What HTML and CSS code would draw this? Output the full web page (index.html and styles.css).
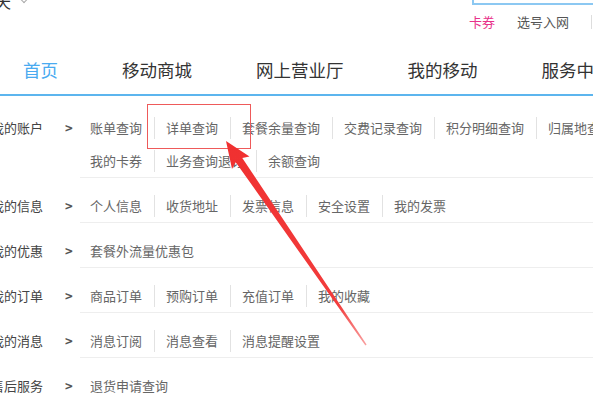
FILE: index.html
```html
<!DOCTYPE html>
<html lang="zh-CN">
<head>
    <meta charset="UTF-8">
    <meta name="viewport" content="width=device-width, initial-scale=1.0">
    <title>我的移动</title>
    <link rel="stylesheet" href="styles.css">
</head>
<body>
    <div class="page">
        <div class="top">
            <div class="city">天<span class="caret"></span></div>
            <div class="tools">
                <svg class="search" width="130" height="5" viewBox="0 0 130 5">
                    <path d="M1 0 V4 H130" fill="none" stroke="#8cc8f2" stroke-width="2"/>
                </svg>
                <div class="quick">
                    <a class="quick-link hot" href="#">卡券</a>
                    <a class="quick-link" href="#">选号入网</a>
                    <span class="bar"></span>
                </div>
            </div>
        </div>

        <div class="nav">
            <a class="nav-item active" href="#">首页</a>
            <a class="nav-item" href="#">移动商城</a>
            <a class="nav-item" href="#">网上营业厅</a>
            <a class="nav-item" href="#">我的移动</a>
            <a class="nav-item" href="#">服务中心</a>
        </div>

        <div class="menu">
            <div class="row">
                <div class="label"><span class="name">我的账户</span><span class="arrow">&gt;</span></div>
                <div class="links">
                    <div class="line">
                        <a href="#">账单查询</a>
                        <a href="#">详单查询</a>
                        <a href="#">套餐余量查询</a>
                        <a href="#">交费记录查询</a>
                        <a href="#">积分明细查询</a>
                        <a href="#">归属地查询</a>
                    </div>
                    <div class="line">
                        <a href="#">我的卡券</a>
                        <a href="#">业务查询退订</a>
                        <a href="#">余额查询</a>
                    </div>
                </div>
            </div>
            <div class="row">
                <div class="label"><span class="name">我的信息</span><span class="arrow">&gt;</span></div>
                <div class="links">
                    <div class="line">
                        <a href="#">个人信息</a>
                        <a href="#">收货地址</a>
                        <a href="#">发票信息</a>
                        <a href="#">安全设置</a>
                        <a href="#">我的发票</a>
                    </div>
                </div>
            </div>
            <div class="row">
                <div class="label"><span class="name">我的优惠</span><span class="arrow">&gt;</span></div>
                <div class="links">
                    <div class="line">
                        <a href="#">套餐外流量优惠包</a>
                    </div>
                </div>
            </div>
            <div class="row">
                <div class="label"><span class="name">我的订单</span><span class="arrow">&gt;</span></div>
                <div class="links">
                    <div class="line">
                        <a href="#">商品订单</a>
                        <a href="#">预购订单</a>
                        <a href="#">充值订单</a>
                        <a href="#">我的收藏</a>
                    </div>
                </div>
            </div>
            <div class="row">
                <div class="label"><span class="name">我的消息</span><span class="arrow">&gt;</span></div>
                <div class="links">
                    <div class="line">
                        <a href="#">消息订阅</a>
                        <a href="#">消息查看</a>
                        <a href="#">消息提醒设置</a>
                    </div>
                </div>
            </div>
            <div class="row">
                <div class="label"><span class="name">售后服务</span><span class="arrow">&gt;</span></div>
                <div class="links">
                    <div class="line">
                        <a href="#">退货申请查询</a>
                    </div>
                </div>
            </div>
        </div>

        <svg class="marks" width="593" height="400" viewBox="0 0 593 400">
            <defs>
                <linearGradient id="fade" x1="226" y1="141" x2="366" y2="345" gradientUnits="userSpaceOnUse">
                    <stop offset="0" stop-color="#f03030"/>
                    <stop offset="0.8" stop-color="#f23c3c"/>
                    <stop offset="1" stop-color="#f9a0a0"/>
                </linearGradient>
            </defs>
            <rect x="147.5" y="104.5" width="103" height="44" fill="none" stroke="#ee5a5a" stroke-width="1"/>
            <polygon fill="url(#fade)" points="226,141 249.5,156.5 242.3,158 366.6,344.6 365.4,345.4 235.7,162.2 232,169"/>
        </svg>
    </div>
</body>
</html>
```

FILE: styles.css
```css
body {
    margin: 0;
    padding: 0;
    background-color: #fff;
    font-family: "Microsoft YaHei", "Noto Sans CJK SC", sans-serif;
    overflow: hidden;
}

a {
    text-decoration: none;
}

.page {
    position: relative;
    width: 593px;
    height: 400px;
    overflow: hidden;
}

.top {
    display: flex;
    align-items: flex-start;
    height: 44px;
}

    .top .city {
        flex-shrink: 0;
        margin: -9px 0 0 -5px;
        font-size: 16px;
        line-height: 20px;
        height: 20px;
        color: #333;
        white-space: nowrap;
    }

    .top .caret {
        display: inline-block;
        width: 5px;
        height: 5px;
        margin-left: 10px;
        border-right: 1px solid #aaa;
        border-bottom: 1px solid #aaa;
        transform: translateY(-6px) rotate(45deg);
    }

.tools {
    margin-left: 442px;
    flex-shrink: 0;
}

    .tools .search {
        display: block;
        margin-left: 3px;
    }

.quick {
    display: flex;
    align-items: center;
    margin-top: 9px;
    font-size: 13px;
    line-height: 16px;
    white-space: nowrap;
}

    .quick .quick-link {
        margin-right: 22px;
        color: #555;
    }

        .quick .quick-link.hot {
            color: #e8318a;
        }

    .quick .bar {
        width: 1px;
        height: 14px;
        background-color: #ddd;
    }

.nav {
    display: flex;
    height: 50px;
    align-items: center;
    padding-left: 23px;
    border-bottom: 2px solid #5cb5ee;
    white-space: nowrap;
}

    .nav .nav-item {
        margin-right: 64px;
        font-size: 17.5px;
        color: #333;
        flex-shrink: 0;
    }

        .nav .nav-item.active {
            color: #4aaaf0;
        }

.menu {
    margin: 4px 0 0 -9px;
}

.row {
    display: flex;
}

    .row .label {
        display: flex;
        width: 89px;
        flex-shrink: 0;
        padding-top: 17px;
        font-size: 13px;
        line-height: 22px;
        color: #444;
        white-space: nowrap;
    }

        .row .label .arrow {
            margin-left: 22px;
            font-weight: bold;
            color: #555;
        }

    .row .links {
        flex: 1;
        padding: 17px 0 5px 10px;
        border-bottom: 1px solid #eee;
    }

.line {
    display: flex;
    white-space: nowrap;
}

    .line + .line {
        margin-top: 11px;
    }

    .line a {
        flex-shrink: 0;
        padding: 0 12px 0 11px;
        font-size: 13px;
        line-height: 22px;
        color: #666;
        border-left: 1px solid #e2e2e2;
    }

        .line a:first-child {
            padding-left: 0;
            border-left: none;
        }

.marks {
    position: absolute;
    top: 0;
    left: 0;
    pointer-events: none;
}
```
